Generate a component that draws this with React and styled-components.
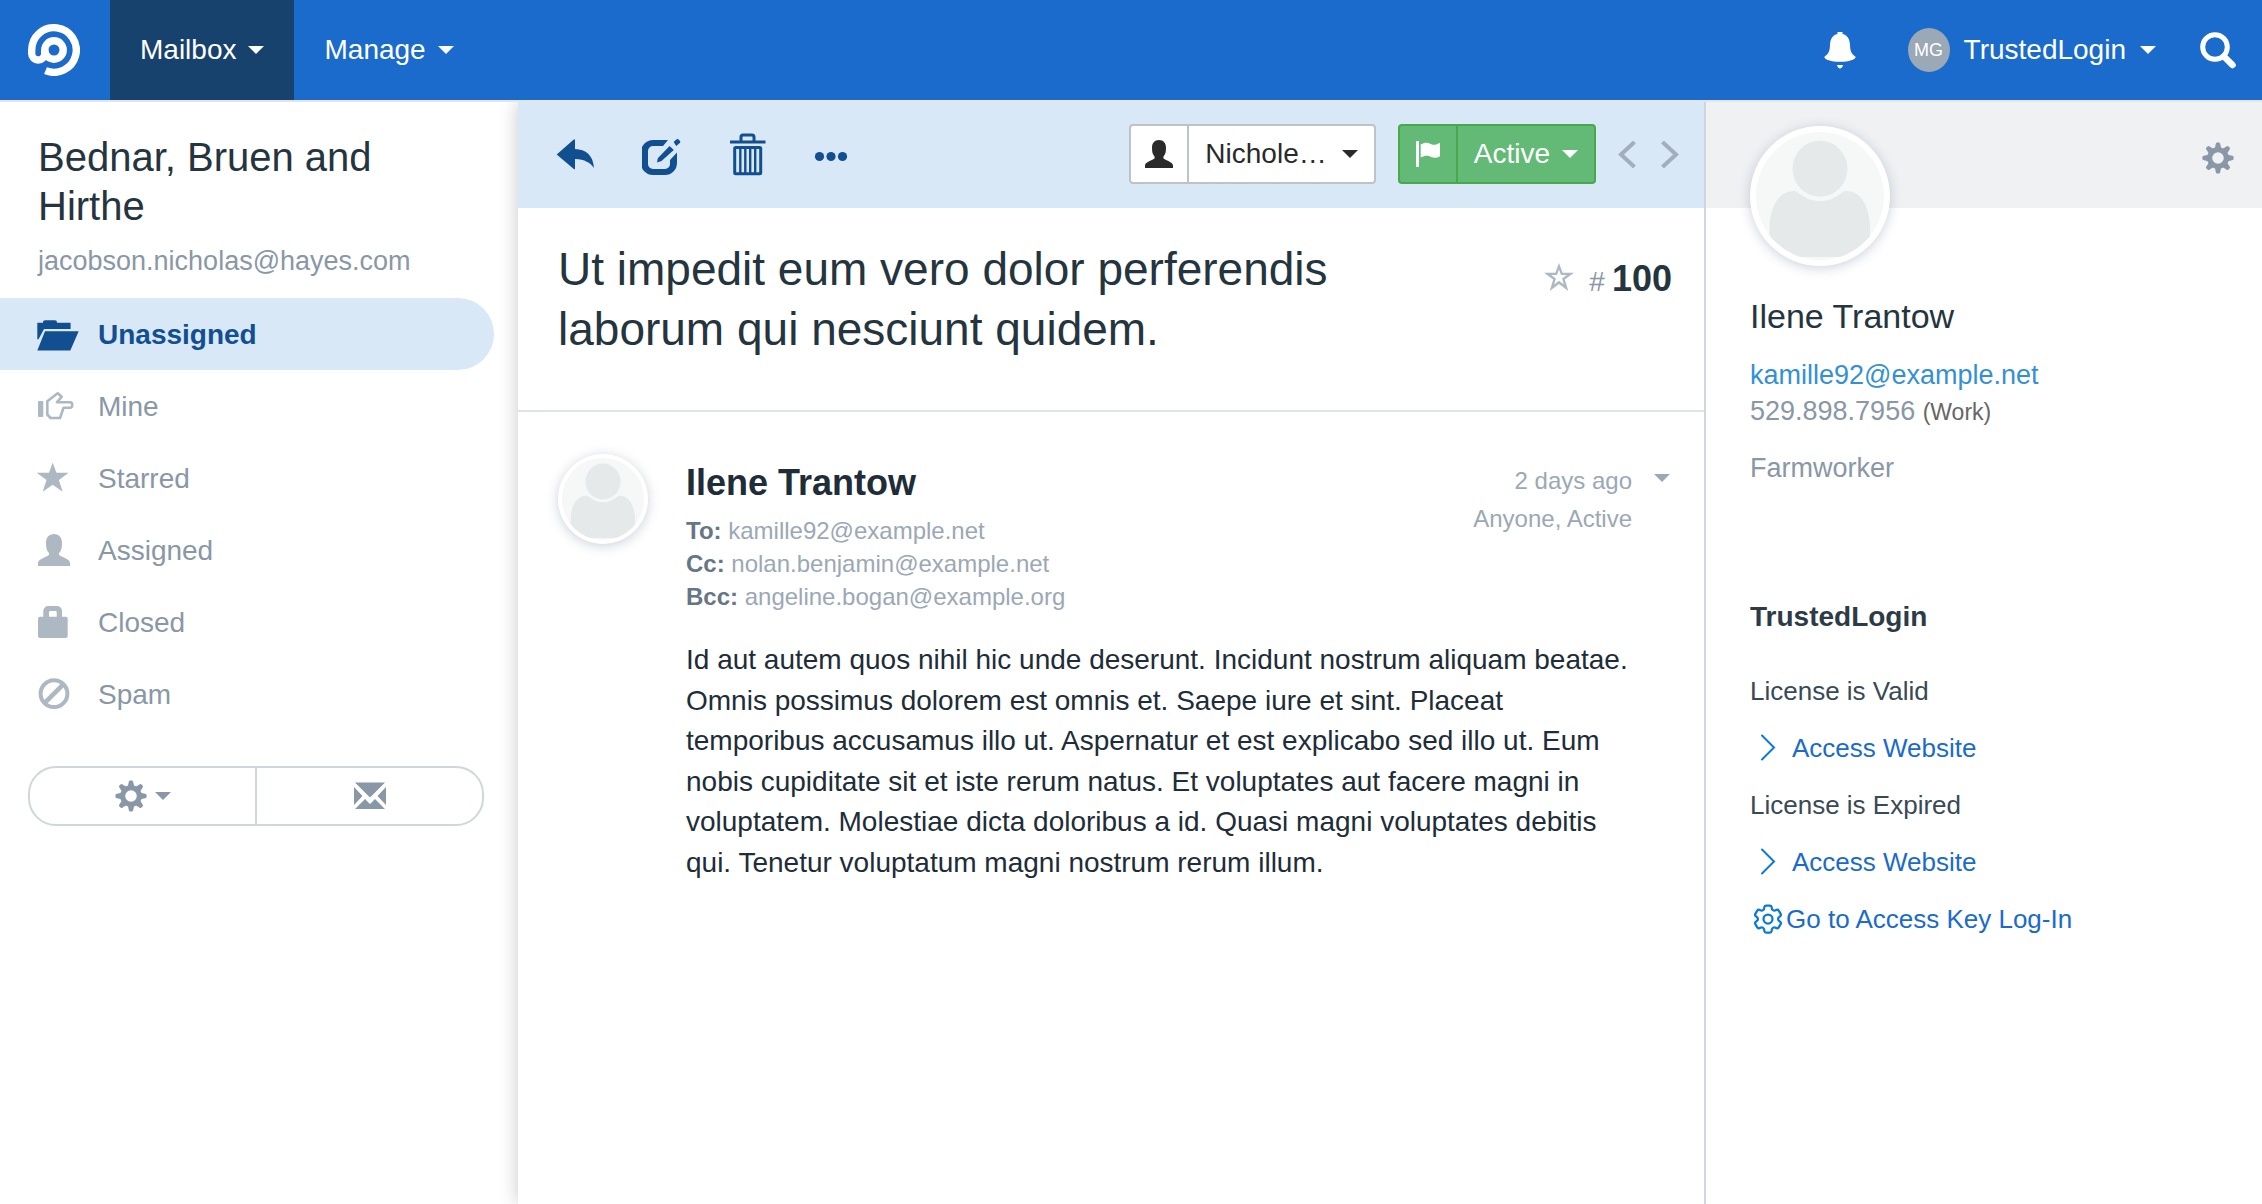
import React from "react";
import styled, { createGlobalStyle } from "styled-components";
import { HiOutlineCog6Tooth } from "react-icons/hi2";

const c = {
  nav: "#1a6bcc",
  navActive: "#18426e",
  tint: "#d9e8f7",
  deep: "#124f90",
  ink: "#253540",
  body: "#202d38",
  muted: "#8997a6",
  soft: "#9ba8b5",
  icon: "#adb8c3",
  line: "#ced6de",
  rule: "#dfe4e8",
  link: "#1a6bcc",
};

const GlobalStyle = createGlobalStyle`
  *, *::before, *::after { box-sizing: border-box; }
  body {
    margin: 0;
    background: #fff;
    color: ${c.ink};
    font: 28px/36px "Liberation Sans", Arial, sans-serif;
  }
  h1, h2, h3, p, ul { margin: 0; padding: 0; font-weight: 400; }
  ul { list-style: none; }
  a { color: inherit; text-decoration: none; }
  button { margin: 0; padding: 0; border: 0; background: none; color: inherit; font: inherit; cursor: pointer; }
  svg { display: block; flex: none; }
`;

const Page = styled.div`
  min-height: 100vh;
  display: flex;
  flex-direction: column;
`;

const NavBar = styled.header`
  position: relative;
  z-index: 3;
  display: flex;
  align-items: stretch;
  justify-content: space-between;
  height: 102px;
  padding-right: 26px;
  background: ${c.nav};
  border-bottom: 2px solid #e4e5e6;
  color: #fff;
`;

const NavGroup = styled.nav`
  display: flex;
  align-items: stretch;
`;

const Brand = styled.a`
  display: flex;
  align-items: center;
  padding: 0 30px 0 28px;
`;

const NavItem = styled.button`
  display: flex;
  align-items: center;
  gap: 12px;
  padding: 0 30px;
  background: ${(p) => (p.$active ? c.navActive : "transparent")};
`;

const NavTools = styled.div`
  display: flex;
  align-items: center;
`;

const AccountButton = styled.button`
  display: flex;
  align-items: center;
  gap: 14px;
  margin: 0 44px 0 52px;
`;

const Initials = styled.span`
  display: flex;
  align-items: center;
  justify-content: center;
  width: 42px;
  height: 44px;
  border-radius: 50%;
  background: #9ba8b5;
  font-size: 18px;
`;

const Caret = styled.span`
  flex: none;
  border: 8px solid transparent;
  border-top-color: currentColor;
  border-bottom: 0;
`;

const Columns = styled.div`
  flex: 1;
  display: grid;
  grid-template-columns: 518px minmax(0, 1fr) 558px;
`;

const Sidebar = styled.aside`
  padding: 31px 0 40px;
`;

const MailboxTitle = styled.h2`
  padding: 0 38px;
  font-size: 40px;
  line-height: 49px;
`;

const MailboxEmail = styled.p`
  margin: 12px 0 19px;
  padding: 0 38px;
  font-size: 27px;
  color: ${c.muted};
`;

const Folder = styled.a`
  display: flex;
  align-items: center;
  gap: 17px;
  height: 72px;
  margin-right: 24px;
  padding-left: 37px;
  border-radius: 0 36px 36px 0;
  background: ${(p) => (p.$active ? c.tint : "transparent")};
  color: ${(p) => (p.$active ? c.deep : c.muted)};
  font-weight: ${(p) => (p.$active ? 700 : 400)};
  svg { color: ${(p) => (p.$active ? c.deep : c.icon)}; }
`;

const FolderName = styled.span`
  padding-top: 2px;
`;

const SidebarButtons = styled.div`
  display: flex;
  height: 60px;
  margin: 36px 34px 0 28px;
  border: 2px solid ${c.line};
  border-radius: 28px;
  color: ${c.muted};
`;

const SidebarButton = styled.button`
  flex: 1;
  display: flex;
  align-items: center;
  justify-content: center;
  gap: 8px;
  & + & { border-left: 2px solid ${c.line}; }
`;

const Conversation = styled.main`
  position: relative;
  z-index: 1;
  background: #fff;
  box-shadow: 0 0 18px rgba(0, 0, 0, 0.22);
`;

const Toolbar = styled.div`
  display: flex;
  align-items: center;
  justify-content: space-between;
  height: 106px;
  padding: 0 25px 0 38px;
  background: ${c.tint};
`;

const ToolGroup = styled.div`
  display: flex;
  align-items: center;
  gap: ${(p) => p.$gap}px;
  color: ${c.deep};
`;

const StatusGroup = styled(ToolGroup)`
  margin-bottom: 2px;
`;

const PagerGroup = styled(ToolGroup)`
  color: #a2afbb;
`;

const SplitButton = styled.div`
  display: flex;
  height: 60px;
  border: 2px solid ${(p) => (p.$green ? "#48a94c" : "#bfc3c8")};
  border-radius: 4px;
  background: ${(p) => (p.$green ? "#63ba77" : "#fff")};
  color: ${(p) => (p.$green ? "#fff" : "#2a2a2a")};
`;

const SplitIcon = styled.button`
  display: flex;
  align-items: center;
  justify-content: center;
  width: 58px;
  border-right: 2px solid ${(p) => (p.$green ? "#48a94c" : "#bfc3c8")};
`;

const SplitLabel = styled.button`
  display: flex;
  align-items: center;
  gap: ${(p) => p.$gap}px;
  padding: 0 16px;
`;

const SubjectBar = styled.div`
  display: flex;
  align-items: flex-start;
  justify-content: space-between;
  gap: 96px;
  padding: 31px 32px 51px 40px;
  border-bottom: 2px solid ${c.rule};
`;

const Subject = styled.h1`
  font-size: 46px;
  line-height: 60px;
`;

const Ticket = styled.div`
  display: flex;
  align-items: baseline;
  gap: 7px;
  padding-top: 10px;
  line-height: 60px;
  color: ${c.muted};
  button { margin-right: 8px; }
  strong { font-size: 36px; color: ${c.ink}; }
`;

const Message = styled.article`
  display: flex;
  align-items: flex-start;
  padding: 42px 34px 40px 40px;
`;

const Portrait = styled.span`
  flex: none;
  display: block;
  width: ${(p) => p.$size}px;
  height: ${(p) => p.$size}px;
  padding: ${(p) => p.$ring}px;
  border-radius: 50%;
  background: #fff;
  box-shadow: 0 2px 12px rgba(60, 70, 110, 0.25);
  svg { width: 100%; height: 100%; }
`;

const MessageContent = styled.div`
  flex: 1;
  min-width: 0;
  margin: 7px 22px 0 38px;
`;

const MessageHead = styled.header`
  display: flex;
  justify-content: space-between;
  align-items: flex-start;
`;

const Sender = styled.h2`
  margin-bottom: 9px;
  font-size: 36px;
  line-height: 44px;
  font-weight: 700;
  color: ${c.body};
`;

const Recipient = styled.p`
  font-size: 24px;
  line-height: 33px;
  color: ${c.soft};
  strong { color: #667685; }
`;

const Meta = styled.div`
  padding-top: 1px;
  font-size: 24px;
  line-height: 38px;
  text-align: right;
  color: ${c.soft};
`;

const MessageBody = styled.p`
  margin-top: 27px;
  line-height: 1.45;
  color: ${c.body};
`;

const MessageMenu = styled.button`
  display: flex;
  align-items: center;
  height: 48px;
  color: ${c.soft};
`;

const Customer = styled.aside`
  position: relative;
  z-index: 2;
  background: #fff;
  border-left: 2px solid ${c.line};
`;

const CustomerBanner = styled.div`
  display: flex;
  align-items: flex-start;
  justify-content: space-between;
  height: 106px;
  padding: 24px 28px 0 44px;
  background: #eff1f3;
  color: ${c.muted};
  button { margin-top: 16px; }
`;

const CustomerBody = styled.div`
  padding: 88px 44px 40px;
`;

const CustomerName = styled.h2`
  margin-bottom: 21px;
  font-size: 34px;
  line-height: 40px;
`;

const Detail = styled.p`
  margin-top: ${(p) => p.$top || 0}px;
  font-size: 27px;
  color: ${c.muted};
  a { color: #3490d6; }
  small { font-size: 23px; color: #666; }
`;

const WidgetTitle = styled.h3`
  margin: 113px 0 38px;
  font-size: 28px;
  font-weight: 700;
  color: #2d3b47;
`;

const WidgetList = styled.div`
  display: flex;
  flex-direction: column;
  align-items: flex-start;
  gap: 21px;
  font-size: 26px;
  color: #394956;
`;

const WidgetLink = styled.a`
  display: flex;
  align-items: center;
  gap: ${(p) => p.$gap || 0}px;
  color: ${c.link};
  svg { color: #0b7ad6; }
`;

/* Outline of a toothed wheel with a round hole, centred in a 32 unit box. */
function wheelPath() {
  const pts = [];
  const at = (r, deg) => {
    const a = (deg * Math.PI) / 180;
    return `${(16 + r * Math.sin(a)).toFixed(2)} ${(16 - r * Math.cos(a)).toFixed(2)}`;
  };
  for (let i = 0; i < 8; i++) {
    const m = i * 45;
    pts.push(`${i ? "L" : "M"}${at(11.2, m - 15)}`);
    pts.push(`L${at(14.2, m - 9)}`);
    pts.push(`Q${at(15.6, m - 8)} ${at(15.6, m - 4)}`);
    pts.push(`L${at(15.6, m + 4)}`);
    pts.push(`Q${at(15.6, m + 8)} ${at(14.2, m + 9)}`);
    pts.push(`L${at(11.2, m + 15)}`);
    pts.push(`Q${at(10.2, m + 22.5)} ${at(11.2, m + 30)}`);
  }
  return `${pts.join("")}ZM16 10.2a5.8 5.8 0 1 0 0 11.6a5.8 5.8 0 1 0 0-11.6Z`;
}
const WHEEL = wheelPath();

const Wheel = () => (
  <svg width="32" height="32" viewBox="0 0 32 32" fill="currentColor" fillRule="evenodd" aria-hidden="true">
    <path d={WHEEL} />
  </svg>
);

const Logo = () => (
  <svg width="52" height="52" viewBox="0 0 52 52" fill="none" stroke="#fff" strokeWidth="7.4" aria-hidden="true">
    <circle cx="26" cy="26" r="9.2" />
    <path d="M17.5 46.6A22.3 22.3 0 1 0 3.7 26V29.5A6.5 6.5 0 0 0 16.7 29.5V26" />
  </svg>
);

const Bell = () => (
  <svg width="32" height="37" viewBox="0 0 32 37" fill="currentColor" aria-hidden="true">
    <path d="M13.5 0h5v2c5 1 7.3 5.5 7.5 11 .2 6 1.3 8.5 5.500 11.8 1 2.2-6 5-15.500 5s-16.500-2.800-15.500-5C4.700 21.500 5.800 19 6 13 6.200 7.500 8.500 3 13.500 2ZM13 33h6c-.5 2-1.700 3.500-3 3.500S13.500 35 13 33Z" />
  </svg>
);

const Search = () => (
  <svg width="36" height="37" viewBox="0 0 36 37" fill="none" stroke="currentColor" aria-hidden="true">
    <circle cx="15" cy="15" r="12.3" strokeWidth="5" />
    <path d="M24 24.5l8.5 8.5" strokeWidth="6.5" strokeLinecap="round" />
  </svg>
);

const FolderSvg = ({ children }) => (
  <svg width="44" height="34" viewBox="0 0 44 34" fill="currentColor" aria-hidden="true">{children}</svg>
);

const PERSON = "M17 1c5.200 0 8 3.700 8 8.700 0 5-.6 8-3 10.300v1.800c2 2.400 11 4.200 11 8.200v3H1v-3c0-4 9-5.800 11-8.200V20c-2.400-2.300-3-5.300-3-10.300C9 4.700 11.800 1 17 1Z";

const folders = [
  { name: "Unassigned", active: true, art: (
    <path d="M.3 5.700H6c0-1.700.6-2.500 2.200-2.500h9.600c1.600 0 2.200.8 2.200 2.500h13.600V12H7L1.500 22.300H.3ZM8 14.300h33.700L33.300 33.400H.3Z" />
  ) },
  { name: "Mine", art: (
    <>
      <rect x="1" y="12" width="5.3" height="16" rx="1" />
      <path d="M10.300 12.300L20.700 4.200l4 3.600-4.700 5.400H33c3 0 3 5.600 0 5.600h-6.500L23 29H13.500l-3.200-3.500Z" fill="none" stroke="currentColor" strokeWidth="2.6" strokeLinejoin="round" />
    </>
  ) },
  { name: "Starred", art: <path d="M15.700 1.500l3.700 10.200h12.300l-9.800 7.300 3.800 11.800-10-7.100-10 7.100L9.500 19-.3 11.700h12.300Z" /> },
  { name: "Assigned", art: <path d={PERSON} /> },
  { name: "Closed", art: (
    <path fillRule="evenodd" d="M6.300 11.700V6a5 5 0 0 1 5-5H20a5 5 0 0 1 5 5v5.700h3.700a2 2 0 0 1 2 2V31a2 2 0 0 1-2 2H3a2 2 0 0 1-2-2V13.700a2 2 0 0 1 2-2ZM12 11.700h7.700V7.200a1.200 1.200 0 0 0-1.200-1.200h-5.300a1.200 1.200 0 0 0-1.200 1.200Z" />
  ) },
  { name: "Spam", art: (
    <g fill="none" stroke="currentColor">
      <circle cx="17" cy="16.7" r="13.4" strokeWidth="4" />
      <path d="M7.500 26.200l19-19" strokeWidth="4.6" />
    </g>
  ) },
];

const Envelope = () => (
  <svg width="32" height="28" viewBox="0 0 32 28" fill="currentColor" aria-hidden="true">
    <path d="M1 .5h30L16 15.500ZM0 5l8.500 9L0 23ZM32 5l-8.500 9 8.500 9ZM1 27l10-10 5 5 5-5 10 10Z" />
  </svg>
);

const Reply = () => (
  <svg width="38" height="44" viewBox="0 0 38 44" fill="currentColor" aria-hidden="true">
    <path d="M.7 21.500L17.500 6.700Q19 5.500 19 7V16C30 16.500 37 22 38 35 34 29.500 29 26.500 19 26V35.500Q19 37 17.500 35.700Z" />
  </svg>
);

const Edit = () => (
  <svg width="40" height="44" viewBox="1 0 40 44" fill="currentColor" aria-hidden="true">
    <path d="M27 7H12A12 12 0 0 0 0 19V30A12 12 0 0 0 12 42H24A12 12 0 0 0 36 30V19.500L29 27V31A5 5 0 0 1 24 36H12A5 5 0 0 1 7 31V18A5 5 0 0 1 12 13H22Z" />
    <path d="M16 29.500l.8-4.200L28.600 13l4.200 4L20.500 28ZM32.600 9l3-2.700q1-.8 2 .2l1.400 1.500q.8 1-.2 2L35.300 13Z" />
  </svg>
);

const Trash = () => (
  <svg width="36" height="44" viewBox="0 0 36 44" fill="none" stroke="currentColor" strokeWidth="3" aria-hidden="true">
    <path d="M0 9h35.500" />
    <path d="M11 8V4q0-2 2-2h9q2 0 2 2v4" />
    <rect x="4.7" y="14.5" width="26" height="26.3" rx="1" />
    <path d="M10.300 15v25M15.300 15v25M20.200 15v25M25.200 15v25" strokeWidth="2.4" />
  </svg>
);

const Dots = () => (
  <svg width="34" height="44" viewBox="0 0 34 44" fill="currentColor" aria-hidden="true">
    <circle cx="5.500" cy="23.5" r="4.6" />
    <circle cx="17" cy="23.5" r="4.6" />
    <circle cx="28.500" cy="23.5" r="4.6" />
  </svg>
);

const Person = () => (
  <svg width="28" height="28" viewBox="1 1 32 32" fill="currentColor" aria-hidden="true">
    <path d={PERSON} />
  </svg>
);

const Flag = () => (
  <svg width="24" height="26" viewBox="0 0 24 26" fill="currentColor" aria-hidden="true">
    <path d="M0 0h3v26H0ZM4.700 3.500c5-3 8-1.500 10.500-.3 3 1.300 5.500.3 8.800-1.500v13.500c-3.500 2-6 2-8.800.8-2.600-1.200-5.500-2-10.500.6Z" />
  </svg>
);

const Pager = ({ d }) => (
  <svg width="18" height="27" viewBox="0 0 18 27" fill="none" stroke="currentColor" strokeWidth="4" aria-hidden="true">
    <path d={d} />
  </svg>
);

const StarOutline = () => (
  <svg width="30" height="28" viewBox="0 0 30 28" fill={c.icon} fillRule="evenodd" aria-hidden="true">
    <path d="M15 0l3.600 9.700H30l-9.200 6.800L24.300 28 15 21.100 5.700 28l3.500-11.500L0 9.700h11.400ZM15 6.500l-2 5.600H7.200l4.700 3.500-1.800 5.900L15 17.800l4.900 3.700-1.800-5.900 4.700-3.500H17Z" />
  </svg>
);

const Chevron = () => (
  <svg width="36" height="36" viewBox="0 0 36 36" fill="none" stroke="currentColor" strokeWidth="2" strokeLinecap="round" aria-hidden="true">
    <path d="M12 5.500L24 17.500 12 29.500" />
  </svg>
);

const Silhouette = () => (
  <svg viewBox="0 0 128 128" aria-hidden="true">
    <clipPath id="disc"><circle cx="64" cy="64" r="64" /></clipPath>
    <circle cx="64" cy="64" r="64" fill="#f5f8f7" />
    <g fill="#e5e9e9" clipPath="url(#disc)">
      <ellipse cx="64" cy="36.7" rx="27.5" ry="28" />
      <path d="M38 59C22 59 13.500 76 13.500 98V125H114V98C114 76 106 59 90 59 85 59 80 69 64 69S43 59 38 59Z" />
    </g>
  </svg>
);

const recipients = [
  ["To:", "kamille92@example.net"],
  ["Cc:", "nolan.benjamin@example.net"],
  ["Bcc:", "angeline.bogan@example.org"],
];

const licenses = ["License is Valid", "License is Expired"];

export default function App() {
  return (
    <Page>
      <GlobalStyle />
      <NavBar>
        <NavGroup>
          <Brand href="#" aria-label="Home"><Logo /></Brand>
          <NavItem $active>Mailbox<Caret /></NavItem>
          <NavItem>Manage<Caret /></NavItem>
        </NavGroup>
        <NavTools>
          <button aria-label="Notifications"><Bell /></button>
          <AccountButton><Initials>MG</Initials>TrustedLogin<Caret /></AccountButton>
          <button aria-label="Search"><Search /></button>
        </NavTools>
      </NavBar>

      <Columns>
        <Sidebar>
          <MailboxTitle>Bednar, Bruen and Hirthe</MailboxTitle>
          <MailboxEmail>jacobson.nicholas@hayes.com</MailboxEmail>
          <ul>
            {folders.map((f) => (
              <li key={f.name}>
                <Folder href="#" $active={f.active}>
                  <FolderSvg>{f.art}</FolderSvg>
                  <FolderName>{f.name}</FolderName>
                </Folder>
              </li>
            ))}
          </ul>
          <SidebarButtons>
            <SidebarButton aria-label="Mailbox settings"><Wheel /><Caret /></SidebarButton>
            <SidebarButton aria-label="New conversation"><Envelope /></SidebarButton>
          </SidebarButtons>
        </Sidebar>

        <Conversation>
          <Toolbar>
            <ToolGroup $gap={48}>
              <button aria-label="Reply"><Reply /></button>
              <button aria-label="Edit"><Edit /></button>
              <button aria-label="Delete"><Trash /></button>
              <button aria-label="More"><Dots /></button>
            </ToolGroup>
            <StatusGroup $gap={22}>
              <SplitButton>
                <SplitIcon aria-label="Assignee"><Person /></SplitIcon>
                <SplitLabel $gap={15}>Nichole…<Caret /></SplitLabel>
              </SplitButton>
              <SplitButton $green>
                <SplitIcon $green aria-label="Status"><Flag /></SplitIcon>
                <SplitLabel $gap={12}>Active<Caret /></SplitLabel>
              </SplitButton>
              <PagerGroup $gap={25}>
                <button aria-label="Previous"><Pager d="M16.500 1L3 13.500 16.500 26" /></button>
                <button aria-label="Next"><Pager d="M1.500 1L15 13.500 1.500 26" /></button>
              </PagerGroup>
            </StatusGroup>
          </Toolbar>

          <SubjectBar>
            <Subject>Ut impedit eum vero dolor perferendis laborum qui nesciunt quidem.</Subject>
            <Ticket>
              <button aria-label="Star"><StarOutline /></button>
              <span>#</span>
              <strong>100</strong>
            </Ticket>
          </SubjectBar>

          <Message>
            <Portrait $size={90} $ring={4}><Silhouette /></Portrait>
            <MessageContent>
              <MessageHead>
                <div>
                  <Sender>Ilene Trantow</Sender>
                  {recipients.map(([label, email]) => (
                    <Recipient key={label}><strong>{label}</strong> {email}</Recipient>
                  ))}
                </div>
                <Meta>
                  <div>2 days ago</div>
                  <div>Anyone, Active</div>
                </Meta>
              </MessageHead>
              <MessageBody>
                Id aut autem quos nihil hic unde deserunt. Incidunt nostrum aliquam beatae. Omnis possimus dolorem est
                omnis et. Saepe iure et sint. Placeat temporibus accusamus illo ut. Aspernatur et est explicabo sed illo
                ut. Eum nobis cupiditate sit et iste rerum natus. Et voluptates aut facere magni in voluptatem. Molestiae
                dicta doloribus a id. Quasi magni voluptates debitis qui. Tenetur voluptatum magni nostrum rerum illum.
              </MessageBody>
            </MessageContent>
            <MessageMenu aria-label="Message options"><Caret /></MessageMenu>
          </Message>
        </Conversation>

        <Customer>
          <CustomerBanner>
            <Portrait $size={140} $ring={6}><Silhouette /></Portrait>
            <button aria-label="Customer settings"><Wheel /></button>
          </CustomerBanner>
          <CustomerBody>
            <CustomerName>Ilene Trantow</CustomerName>
            <Detail><a href="#">kamille92@example.net</a></Detail>
            <Detail>529.898.7956 <small>(Work)</small></Detail>
            <Detail $top={20}>Farmworker</Detail>
            <WidgetTitle>TrustedLogin</WidgetTitle>
            <WidgetList>
              {licenses.map((text) => (
                <React.Fragment key={text}>
                  <p>{text}</p>
                  <WidgetLink href="#" $gap={6}><Chevron />Access Website</WidgetLink>
                </React.Fragment>
              ))}
              <WidgetLink href="#"><HiOutlineCog6Tooth size={36} />Go to Access Key Log-In</WidgetLink>
            </WidgetList>
          </CustomerBody>
        </Customer>
      </Columns>
    </Page>
  );
}
